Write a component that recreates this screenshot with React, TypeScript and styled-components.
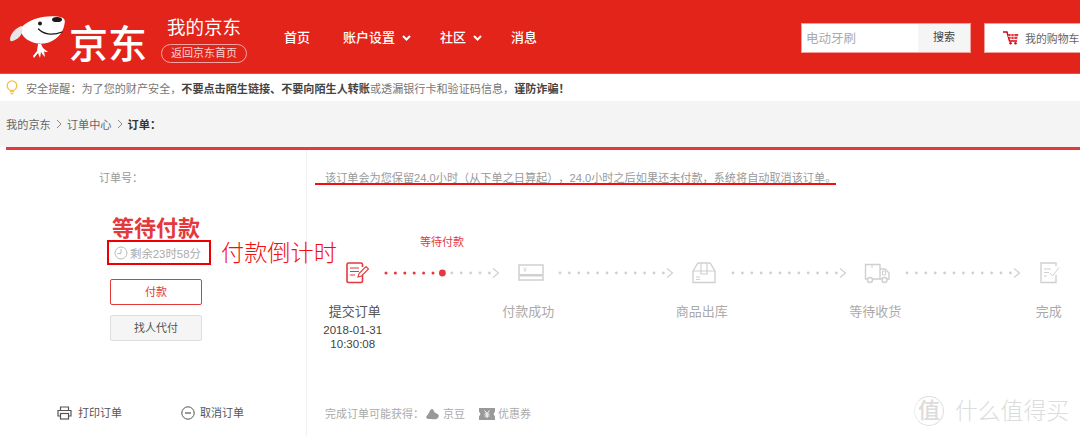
import React from "react";
import styled, { createGlobalStyle } from "styled-components";

const FONT = `"Liberation Sans", "Noto Sans CJK SC", sans-serif`;
const RED = "#e4393c";
const STEP_GREY = "#d0d0d0";

const Global = createGlobalStyle`
  html, body { margin: 0; padding: 0; width: 1080px; height: 436px; overflow: hidden; background: #fff; }
  body { font-family: ${FONT}; font-size: 11px; color: #666; text-spacing-trim: space-all; }
  * { box-sizing: border-box; }
`;

const Page = styled.div`
  position: relative;
  width: 1080px;
  height: 436px;
  overflow: hidden;
`;

/* ---------- header ---------- */
const Header = styled.header`
  display: flex;
  align-items: center;
  height: 74px;
  padding-left: 9px;
  background: #e3241a;
  border-bottom: 1px solid #f04a42;
  color: #fff;
`;
const LogoMark = styled.div`
  flex: none;
  display: flex;
  align-items: center;
  width: 152px;
`;
const LogoText = styled.span`
  font-size: 39px;
  line-height: 42px;
  font-weight: 500;
  margin: 8px 0 0 2px;
  white-space: nowrap;
  font-family: "Noto Sans CJK SC", sans-serif;
`;
const Brand = styled.div`
  flex: none;
  display: flex;
  flex-direction: column;
  align-items: center;
  width: 86px;
  margin-top: 6px;
`;
const BrandTitle = styled.div`
  font-size: 18.5px;
  line-height: 24px;
`;
const HomePill = styled.div`
  margin-top: 4px;
  width: 86px;
  height: 19px;
  border: 1px solid #f4a5a0;
  border-radius: 10px;
  font-size: 11px;
  line-height: 17px;
  text-align: center;
  color: #fbd2cf;
`;
const Nav = styled.nav`
  flex: none;
  display: flex;
  align-items: center;
  margin: 2px 0 0 37px;
  width: 517px;
`;
const NavItem = styled.span<{ $w: number }>`
  display: flex;
  align-items: center;
  width: ${(p) => p.$w}px;
  font-size: 13px;
  line-height: 18px;
  font-weight: 500;
`;
const Caret = styled.svg`
  width: 9px;
  height: 6px;
  margin-left: 7px;
`;
const SearchBox = styled.div`
  flex: none;
  display: flex;
  width: 170px;
  height: 30px;
  margin-top: 3px;
  background: #fff;
  border: 1px solid #f4a09a;
`;
const SearchInput = styled.div`
  flex: 1;
  padding-left: 4px;
  font-size: 12.5px;
  line-height: 30px;
  color: #aaa;
`;
const SearchButton = styled.div`
  width: 52px;
  background: #f5f5f5;
  font-size: 11px;
  line-height: 27px;
  text-align: center;
  color: #444;
`;
const CartButton = styled.div`
  flex: none;
  display: flex;
  align-items: center;
  width: 110px;
  height: 30px;
  margin: 3px 0 0 13px;
  padding-left: 18px;
  background: #fff;
  border: 1px solid #f4a09a;
  white-space: nowrap;
  font-size: 10.9px;
  color: #666;
`;

/* ---------- notice + crumbs ---------- */
const Notice = styled.div`
  display: flex;
  align-items: center;
  height: 27px;
  padding-left: 6px;
  background: #fff;
  font-size: 11.1px;
  color: #777;
`;
const NoticeText = styled.span`
  margin-left: 8px;
  white-space: nowrap;
  b { color: #444; font-weight: 700; }
`;
const Crumbs = styled.div`
  display: flex;
  align-items: center;
  height: 46px;
  padding: 0 0 0 6px;
  background: #f4f4f4;
  font-size: 11.2px;
  color: #666;
  b { color: #333; font-weight: 700; }
`;
const CrumbSep = styled.svg`
  flex: none;
  width: 6px;
  height: 10px;
  margin: 0 5px;
`;

/* ---------- order ---------- */
const Order = styled.main`
  display: flex;
  height: 289px;
  margin-left: 6px;
  border-top: 3px solid ${RED};
`;
const Side = styled.aside`
  flex: none;
  display: flex;
  flex-direction: column;
  width: 301px;
  border-right: 1px solid #f1f1f1;
`;
const OrderNo = styled.div`
  margin: 21px 0 0 93px;
  font-size: 11px;
  line-height: 14px;
  color: #999;
`;
const StatusTitle = styled.div`
  margin: 29px 0 0 106px;
  font-size: 22px;
  line-height: 30px;
  font-weight: 700;
  color: ${RED};
`;
const Countdown = styled.div`
  display: flex;
  align-items: center;
  width: 104px;
  height: 25px;
  margin: -4px 0 0 101px;
  padding-left: 5px;
  border: 2px solid #ee0000;
  font-size: 11.4px;
  color: #aaa;
  white-space: nowrap;
`;
const Button = styled.div<{ $primary?: boolean }>`
  width: 92px;
  height: 26px;
  margin-left: 104px;
  border: 1px solid ${(p) => (p.$primary ? RED : "#ddd")};
  border-radius: 2px;
  background: ${(p) => (p.$primary ? "#fff" : "#f5f5f5")};
  color: ${(p) => (p.$primary ? RED : "#555")};
  font-size: 11px;
  line-height: 24px;
  text-align: center;
`;
const ButtonStack = styled.div`
  display: flex;
  flex-direction: column;
  gap: 10px;
  margin-top: 14px;
`;
const SideActions = styled.div`
  display: flex;
  margin: 64px 0 0 51px;
  font-size: 11px;
  color: #555;
`;
const SideAction = styled.span<{ $w: number; $gap: number }>`
  display: flex;
  align-items: center;
  gap: ${(p) => p.$gap}px;
  width: ${(p) => p.$w}px;
  line-height: 16px;
  white-space: nowrap;
`;

const Content = styled.section`
  position: relative;
  flex: 1;
  min-width: 0;
  display: flex;
  flex-direction: column;
`;
const Message = styled.div`
  margin: 21px 0 0 18px;
  font-size: 11.15px;
  line-height: 14px;
  color: #999;
  white-space: nowrap;
`;
const Waiting = styled.div`
  margin: 50px 0 0 113px;
  width: 44px;
  font-size: 11px;
  line-height: 14px;
  color: ${RED};
  white-space: nowrap;
`;
const Track = styled.div`
  display: flex;
  align-items: center;
  height: 22px;
  margin: 13px 0 0 38px;
`;
const StepIcon = styled.svg`
  flex: none;
  width: 26px;
  height: 22px;
`;
const Connector = styled.svg`
  flex: none;
  width: 147px;
  height: 14px;
`;
const StepLabels = styled.div`
  display: grid;
  grid-template-columns: repeat(5, 173.5px);
  margin: 19px 0 0 -39px;
  width: 870px;
`;
const StepLabel = styled.div<{ $done?: boolean }>`
  text-align: center;
  font-size: 13px;
  line-height: 18px;
  color: ${(p) => (p.$done ? "#555" : "#aaa")};
`;
const StepTime = styled.div`
  margin-top: 2px;
  padding-right: 4px;
  font-size: 11.5px;
  line-height: 14px;
  color: #444;
`;
const Rewards = styled.div`
  display: flex;
  align-items: center;
  position: absolute;
  left: 18px;
  bottom: 14px;
  font-size: 11px;
  line-height: 16px;
  color: #aaa;
  white-space: nowrap;
`;
const Reward = styled.span<{ $ml: number }>`
  display: flex;
  align-items: center;
  gap: 3px;
  margin-left: ${(p) => p.$ml}px;
`;

/* ---------- overlays (annotations on the picture) ---------- */
const CountdownNote = styled.div`
  position: absolute;
  left: 221px;
  top: 238px;
  font-size: 23.2px;
  line-height: 30px;
  font-weight: 300;
  color: #f01010;
  white-space: nowrap;
`;
const Underline = styled.div`
  position: absolute;
  left: 315px;
  top: 183px;
  width: 521px;
  height: 2px;
  background: #ee1111;
`;
const Watermark = styled.div`
  position: absolute;
  left: 914px;
  top: 396px;
  display: flex;
  align-items: center;
  color: #dcdcdc;
`;
const WatermarkSeal = styled.div`
  width: 30px;
  height: 30px;
  border: 1px solid #dedede;
  border-left-color: #eee;
  border-radius: 50%;
  font-size: 22px;
  line-height: 27px;
  text-align: center;
  font-weight: 500;
`;
const WatermarkText = styled.div`
  margin-left: 11px;
  font-size: 22.8px;
  line-height: 30px;
  font-weight: 300;
  white-space: nowrap;
`;

/* ---------- drawings ---------- */
const Dog = () => (
  <svg width="58" height="44" viewBox="9 14 58 44" style={{ flex: "none" }}>
    <path d="M21 27C28 18 44 14 57 15.5C63 16 66 18 64.5 23C63 33 55 41 44 42.5C34 43.5 25 39 22 33L21 30Z" fill="#fff" />
    <path d="M22 25C17 26 10 32 10 39C10 40.5 12 40.5 14 39.5C18 38 22 34 22.5 30Z" fill="#e6e6e6" />
    <ellipse cx="57" cy="18.5" rx="5" ry="2.6" fill="#1a1a1a" />
    <circle cx="40" cy="22.5" r="2" fill="#1a1a1a" />
    <path d="M38.5 28C43 33 52 35 62 31" fill="none" stroke="#1a1a1a" strokeWidth="1.3" strokeLinecap="round" />
    <path d="M38 43L41 43L43 47L48 51L45 51L44 50L45 56L43 54L41 51L40 57L38 52L34 57L33 55L37 50Z" fill="#fff" />
  </svg>
);

const CaretIcon = () => (
  <Caret viewBox="0 0 9 6">
    <path d="M1 1L4.5 4.5L8 1" fill="none" stroke="#fff" strokeWidth="2" />
  </Caret>
);

const CartIcon = () => (
  <svg width="16" height="14" viewBox="0 0 16 14" style={{ marginRight: 6, flex: "none" }}>
    <path d="M0 1H4L6.5 10H14" fill="none" stroke="#d8000f" strokeWidth="1.4" />
    <path d="M5 3H15.5L14 8H6.5Z" fill="#e2353c" />
    <path d="M8 3V8M11 3V8M5 5.5H15" stroke="#fff" strokeWidth=".7" />
    <circle cx="7.5" cy="12.3" r="1.2" fill="#d8000f" />
    <circle cx="12.5" cy="12.3" r="1.2" fill="#d8000f" />
  </svg>
);

const BulbIcon = () => (
  <svg width="12" height="15" viewBox="0 0 12 15" style={{ flex: "none" }}>
    <circle cx="6" cy="5.7" r="4.8" fill="none" stroke="#f3c33b" strokeWidth="1.3" />
    <path d="M3.8 11.5H8.2M4.5 13.6H7.5" stroke="#f3c33b" strokeWidth="1.3" />
  </svg>
);

const CrumbChevron = () => (
  <CrumbSep viewBox="0 0 6 10">
    <path d="M1 1L5 5L1 9" fill="none" stroke="#888" />
  </CrumbSep>
);

const ClockIcon = () => (
  <svg width="14" height="14" viewBox="0 0 14 14" style={{ marginRight: 2, flex: "none" }}>
    <circle cx="7" cy="7" r="6" fill="none" stroke="#bbb" />
    <path d="M7 3V7.5H3.5" fill="none" stroke="#bbb" />
  </svg>
);

const NoteIcon = () => (
  <StepIcon viewBox="0 0 26 22">
    <path d="M16 20.5H3.5Q2 20.5 2 19V2.5Q2 1 3.5 1H16Q17.5 1 17.5 2.5V5M17.5 13V19Q17.5 20.5 16 20.5" fill="none" stroke={RED} strokeWidth="1.6" />
    <path d="M5 6H14M5 9.5H14M5 13H10" stroke={RED} strokeWidth="1.2" />
    <path d="M13 15L14 11.5L21 4.5L23.5 7L16.5 14Z" fill="#fff" stroke={RED} strokeWidth="1.1" />
  </StepIcon>
);
const CardIcon = () => (
  <StepIcon viewBox="0 0 26 22">
    <rect x="1" y="3" width="24" height="15" fill="none" stroke={STEP_GREY} strokeWidth="1.5" />
    <rect x="1.5" y="12" width="23" height="2.5" fill={STEP_GREY} />
    <path d="M5.5 5.5L7 7.5L8.5 5.5M7 7.5V10M5.5 8H8.5" fill="none" stroke={STEP_GREY} strokeWidth=".8" />
  </StepIcon>
);
const BoxIcon = () => (
  <StepIcon viewBox="0 0 26 22">
    <path d="M2 9L7 1H19L24 9V20.5H2Z" fill="none" stroke={STEP_GREY} strokeWidth="1.4" />
    <path d="M2 9H24M10 1.5V12H16V1.5" fill="none" stroke={STEP_GREY} strokeWidth="1.2" />
    <path d="M5 15H9M5 17.5H9" stroke={STEP_GREY} />
  </StepIcon>
);
const TruckIcon = () => (
  <StepIcon viewBox="0 0 26 22">
    <path d="M3 17H1.5V2.5H16V17H9M16 7H21L25 11V17H23M16 17H18" fill="none" stroke={STEP_GREY} strokeWidth="1.4" />
    <path d="M18.5 9H21.5V13H18.5ZM8 2.5V6" fill="none" stroke={STEP_GREY} />
    <circle cx="6" cy="18" r="2.5" fill="#fff" stroke={STEP_GREY} strokeWidth="1.4" />
    <circle cx="20.5" cy="18" r="2.5" fill="#fff" stroke={STEP_GREY} strokeWidth="1.4" />
  </StepIcon>
);
const CheckDocIcon = () => (
  <StepIcon viewBox="0 0 26 22">
    <path d="M19 13V20.5H4V1H19V4" fill="none" stroke={STEP_GREY} strokeWidth="1.4" />
    <path d="M7 7H14M7 10.5H12M7 14H10" stroke={STEP_GREY} />
    <path d="M13 11L15.5 14L22 5.5" fill="none" stroke={STEP_GREY} />
  </StepIcon>
);

const Dots = ({ red = 0, x0 }: { red?: number; x0: number }) => {
  const dots = Array.from({ length: 12 }, (_, i) => i);
  const pitch = 9.4;
  const chevron = x0 + 107;
  return (
    <Connector viewBox="0 0 147 14">
      {dots.map((i) => {
        const isHead = red > 0 && i === red;
        const isRed = i < red;
        return (
          <circle
            key={i}
            cx={x0 + i * pitch}
            cy="7"
            r={isHead ? 3.4 : isRed ? 1.5 : 1.4}
            fill={isHead || isRed ? RED : STEP_GREY}
          />
        );
      })}
      <path d={`M${chevron} 2.5L${chevron + 5.5} 7L${chevron} 11.5`} fill="none" stroke={STEP_GREY} strokeWidth="1.2" />
    </Connector>
  );
};

const PrintIcon = () => (
  <svg width="15" height="14" viewBox="0 0 15 14" style={{ flex: "none" }}>
    <path d="M3.5 4V1H11.5V4M3.5 10H1V4.5H14V10H11.5" fill="none" stroke="#555" strokeWidth="1.2" />
    <rect x="3.5" y="7.5" width="8" height="5.5" fill="none" stroke="#555" strokeWidth="1.2" />
  </svg>
);
const CancelIcon = () => (
  <svg width="14" height="14" viewBox="0 0 14 14" style={{ flex: "none" }}>
    <circle cx="7" cy="7" r="6.2" fill="none" stroke="#555" />
    <path d="M4 7H10" stroke="#555" strokeWidth="1.2" />
  </svg>
);
const BeanIcon = () => (
  <svg width="15" height="12" viewBox="0 0 15 12" style={{ flex: "none" }}>
    <path d="M7 1C9 1 8.5 4 10.5 5C14 6 14.5 8 13 10C11 12 8 11 6 11C2 11.5 0 9.5 2 7.5C4 6 4.5 1.5 7 1Z" fill="#999" />
  </svg>
);
const CouponIcon = () => (
  <svg width="16" height="12" viewBox="0 0 16 12" style={{ flex: "none" }}>
    <path d="M0 0H16V3.5L14.5 6L16 8.5V12H0V8.5L1.5 6L0 3.5Z" fill="#999" />
    <path d="M5.5 2.5L8 5.5L10.5 2.5M8 5.5V10M5.5 6H10.5M5.5 8H10.5" fill="none" stroke="#fff" />
  </svg>
);

const STEPS = ["提交订单", "付款成功", "商品出库", "等待收货", "完成"];

export default function App() {
  return (
    <Page>
      <Global />
      <Header>
        <LogoMark>
          <Dog />
          <LogoText>京东</LogoText>
        </LogoMark>
        <Brand>
          <BrandTitle>我的京东</BrandTitle>
          <HomePill>返回京东首页</HomePill>
        </Brand>
        <Nav>
          <NavItem $w={59}>首页</NavItem>
          <NavItem $w={97}>账户设置<CaretIcon /></NavItem>
          <NavItem $w={71}>社区<CaretIcon /></NavItem>
          <NavItem $w={290}>消息</NavItem>
        </Nav>
        <SearchBox>
          <SearchInput>电动牙刷</SearchInput>
          <SearchButton>搜索</SearchButton>
        </SearchBox>
        <CartButton>
          <CartIcon />
          我的购物车
        </CartButton>
      </Header>

      <Notice>
        <BulbIcon />
        <NoticeText>
          安全提醒：为了您的财产安全，<b>不要点击陌生链接、不要向陌生人转账</b>或透漏银行卡和验证码信息，<b>谨防诈骗！</b>
        </NoticeText>
      </Notice>

      <Crumbs>
        我的京东
        <CrumbChevron />
        订单中心
        <CrumbChevron />
        <b>订单：</b>
      </Crumbs>

      <Order>
        <Side>
          <OrderNo>订单号：</OrderNo>
          <StatusTitle>等待付款</StatusTitle>
          <Countdown>
            <ClockIcon />
            剩余23时58分
          </Countdown>
          <ButtonStack>
            <Button $primary>付款</Button>
            <Button>找人代付</Button>
          </ButtonStack>
          <SideActions>
            <SideAction $w={124} $gap={6}><PrintIcon />打印订单</SideAction>
            <SideAction $w={80} $gap={5}><CancelIcon />取消订单</SideAction>
          </SideActions>
        </Side>
        <Content>
          <Message>该订单会为您保留24.0小时（从下单之日算起），24.0小时之后如果还未付款，系统将自动取消该订单。</Message>
          <Waiting>等待付款</Waiting>
          <Track>
            <NoteIcon />
            <Dots red={6} x0={15} />
            <CardIcon />
            <Dots x0={16} />
            <BoxIcon />
            <Dots x0={16} />
            <TruckIcon />
            <Dots x0={17} />
            <CheckDocIcon />
          </Track>
          <StepLabels>
            {STEPS.map((label, i) => (
              <StepLabel key={label} $done={i === 0}>
                {label}
                {i === 0 && (
                  <StepTime>
                    2018-01-31
                    <br />
                    10:30:08
                  </StepTime>
                )}
              </StepLabel>
            ))}
          </StepLabels>
          <Rewards>
            完成订单可能获得：
            <Reward $ml={1}><BeanIcon />京豆</Reward>
            <Reward $ml={14}><CouponIcon />优惠券</Reward>
          </Rewards>
        </Content>
      </Order>

      <Underline />
      <CountdownNote>付款倒计时</CountdownNote>
      <Watermark>
        <WatermarkSeal>值</WatermarkSeal>
        <WatermarkText>什么值得买</WatermarkText>
      </Watermark>
    </Page>
  );
}
